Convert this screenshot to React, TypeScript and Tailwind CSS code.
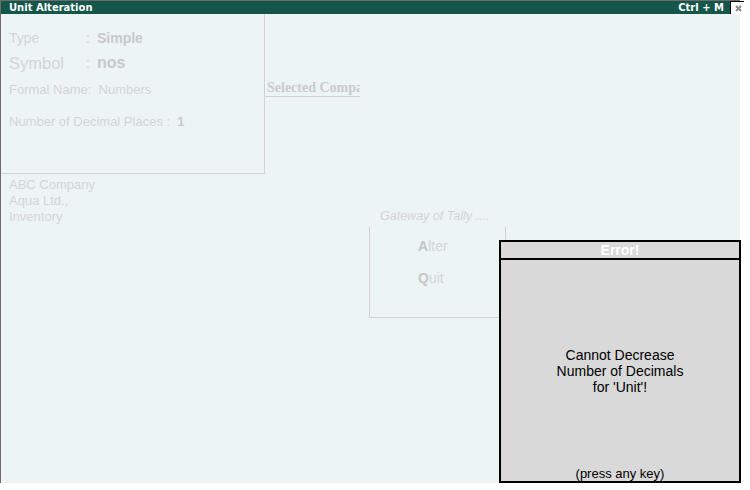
import React from "react";

export default function App() {
  return (
    <div
      className="relative w-[750px] h-[490px] bg-white overflow-hidden"
      style={{ fontFamily: '"Liberation Sans", Arial, sans-serif' }}
    >
      <div className="w-[740px] h-[483px] border-t border-l border-[#6b6b6b] bg-[#ecf5f4] flex flex-col">
        {/* title bar */}
        <div
          className="h-[13px] bg-[#14564a] flex items-center justify-between pl-[8px] pr-[16px] text-white font-bold text-[10px] leading-[13px]"
          style={{ fontFamily: '"DejaVu Sans", Verdana, sans-serif' }}
        >
          <span>Unit Alteration</span>
          <span>Ctrl + M</span>
        </div>

        {/* top row */}
        <div className="flex items-start">
          <div className="w-[264px] h-[160px] border-r border-b border-[#d2d2d2] pl-[8px] flex flex-col text-[#d4d4d4]">
            <div className="mt-[16px] h-[16px] flex items-center text-[14px]">
              <span className="w-[77px]">Type</span>
              <span className="w-[11px]">:</span>
              <span className="font-bold text-[#c9c9c9]">Simple</span>
            </div>
            <div className="mt-[7px] h-[20px] flex items-center text-[16.5px]">
              <span className="w-[77px]">Symbol</span>
              <span className="w-[11px] text-[14px]">:</span>
              <span className="font-bold text-[#c9c9c9] text-[16px]">nos</span>
            </div>
            <div className="mt-[9px] h-[16px] flex items-center text-[13px] whitespace-pre">
              <span>Formal Name:  </span>
              <span>Numbers</span>
            </div>
            <div className="mt-[16px] h-[16px] flex items-center text-[13px] whitespace-pre">
              <span>Number of Decimal Places :  </span>
              <span className="font-bold text-[#c9c9c9]">1</span>
            </div>
          </div>
          <div className="mt-[66px] w-[95px] border-b border-[#d2d2d2] overflow-hidden whitespace-nowrap pl-[2px]">
            <span
              className="block h-[16px] leading-[16px] text-[14px] font-bold text-[#cbcbcb]"
              style={{ fontFamily: '"Liberation Serif", "Times New Roman", serif' }}
            >
              Selected Company
            </span>
          </div>
        </div>

        {/* second row */}
        <div className="flex items-start">
          <div className="w-[368px] pl-[8px] pt-[3px] flex flex-col text-[13px] leading-[16px] text-[#d4d4d4]">
            <span>ABC Company</span>
            <span>Aqua Ltd.,</span>
            <span>Inventory</span>
          </div>
          <div className="flex flex-col pt-[34px]">
            <div className="h-[16px] leading-[16px] pl-[11px] text-[12.5px] italic text-[#d4d4d4]">
              Gateway of Tally ....
            </div>
            <div className="mt-[3px] w-[137px] h-[91px] border-l border-r border-b border-[#d2d2d2] pl-[48px] pt-[11px] flex flex-col text-[14px] text-[#d4d4d4]">
              <div className="h-[16px] leading-[16px]">
                <span className="font-bold text-[#c6c6c6]">A</span>lter
              </div>
              <div className="mt-[16px] h-[16px] leading-[16px]">
                <span className="font-bold text-[#c6c6c6]">Q</span>uit
              </div>
            </div>
          </div>
        </div>
      </div>

      {/* close box */}
      <div className="absolute left-[730px] top-[1px] w-[14px] h-[13px] bg-white border-l border-t border-black flex items-center pl-[4px]">
        <svg width="7" height="7" viewBox="0 0 7 7">
          <path d="M1 1L6 6M6 1L1 6" stroke="#8a8a8a" strokeWidth="2" />
        </svg>
      </div>

      {/* error dialog */}
      <div className="absolute left-[499px] top-[240px] w-[242px] h-[243px] border-2 border-black bg-[#d9d9d9] flex flex-col">
        <div className="h-[18px] border-b-2 border-black flex items-center justify-center text-white font-bold text-[14px] leading-[16px]">
          Error!
        </div>
        <div className="flex-1 flex flex-col items-center text-black">
          <div className="mt-[87px] flex flex-col items-center text-[14px] leading-[16px]">
            <span>Cannot Decrease</span>
            <span>Number of Decimals</span>
            <span>for 'Unit'!</span>
          </div>
          <div className="mt-auto h-[14px] leading-[14px] text-[13px]">(press any key)</div>
        </div>
      </div>
    </div>
  );
}
